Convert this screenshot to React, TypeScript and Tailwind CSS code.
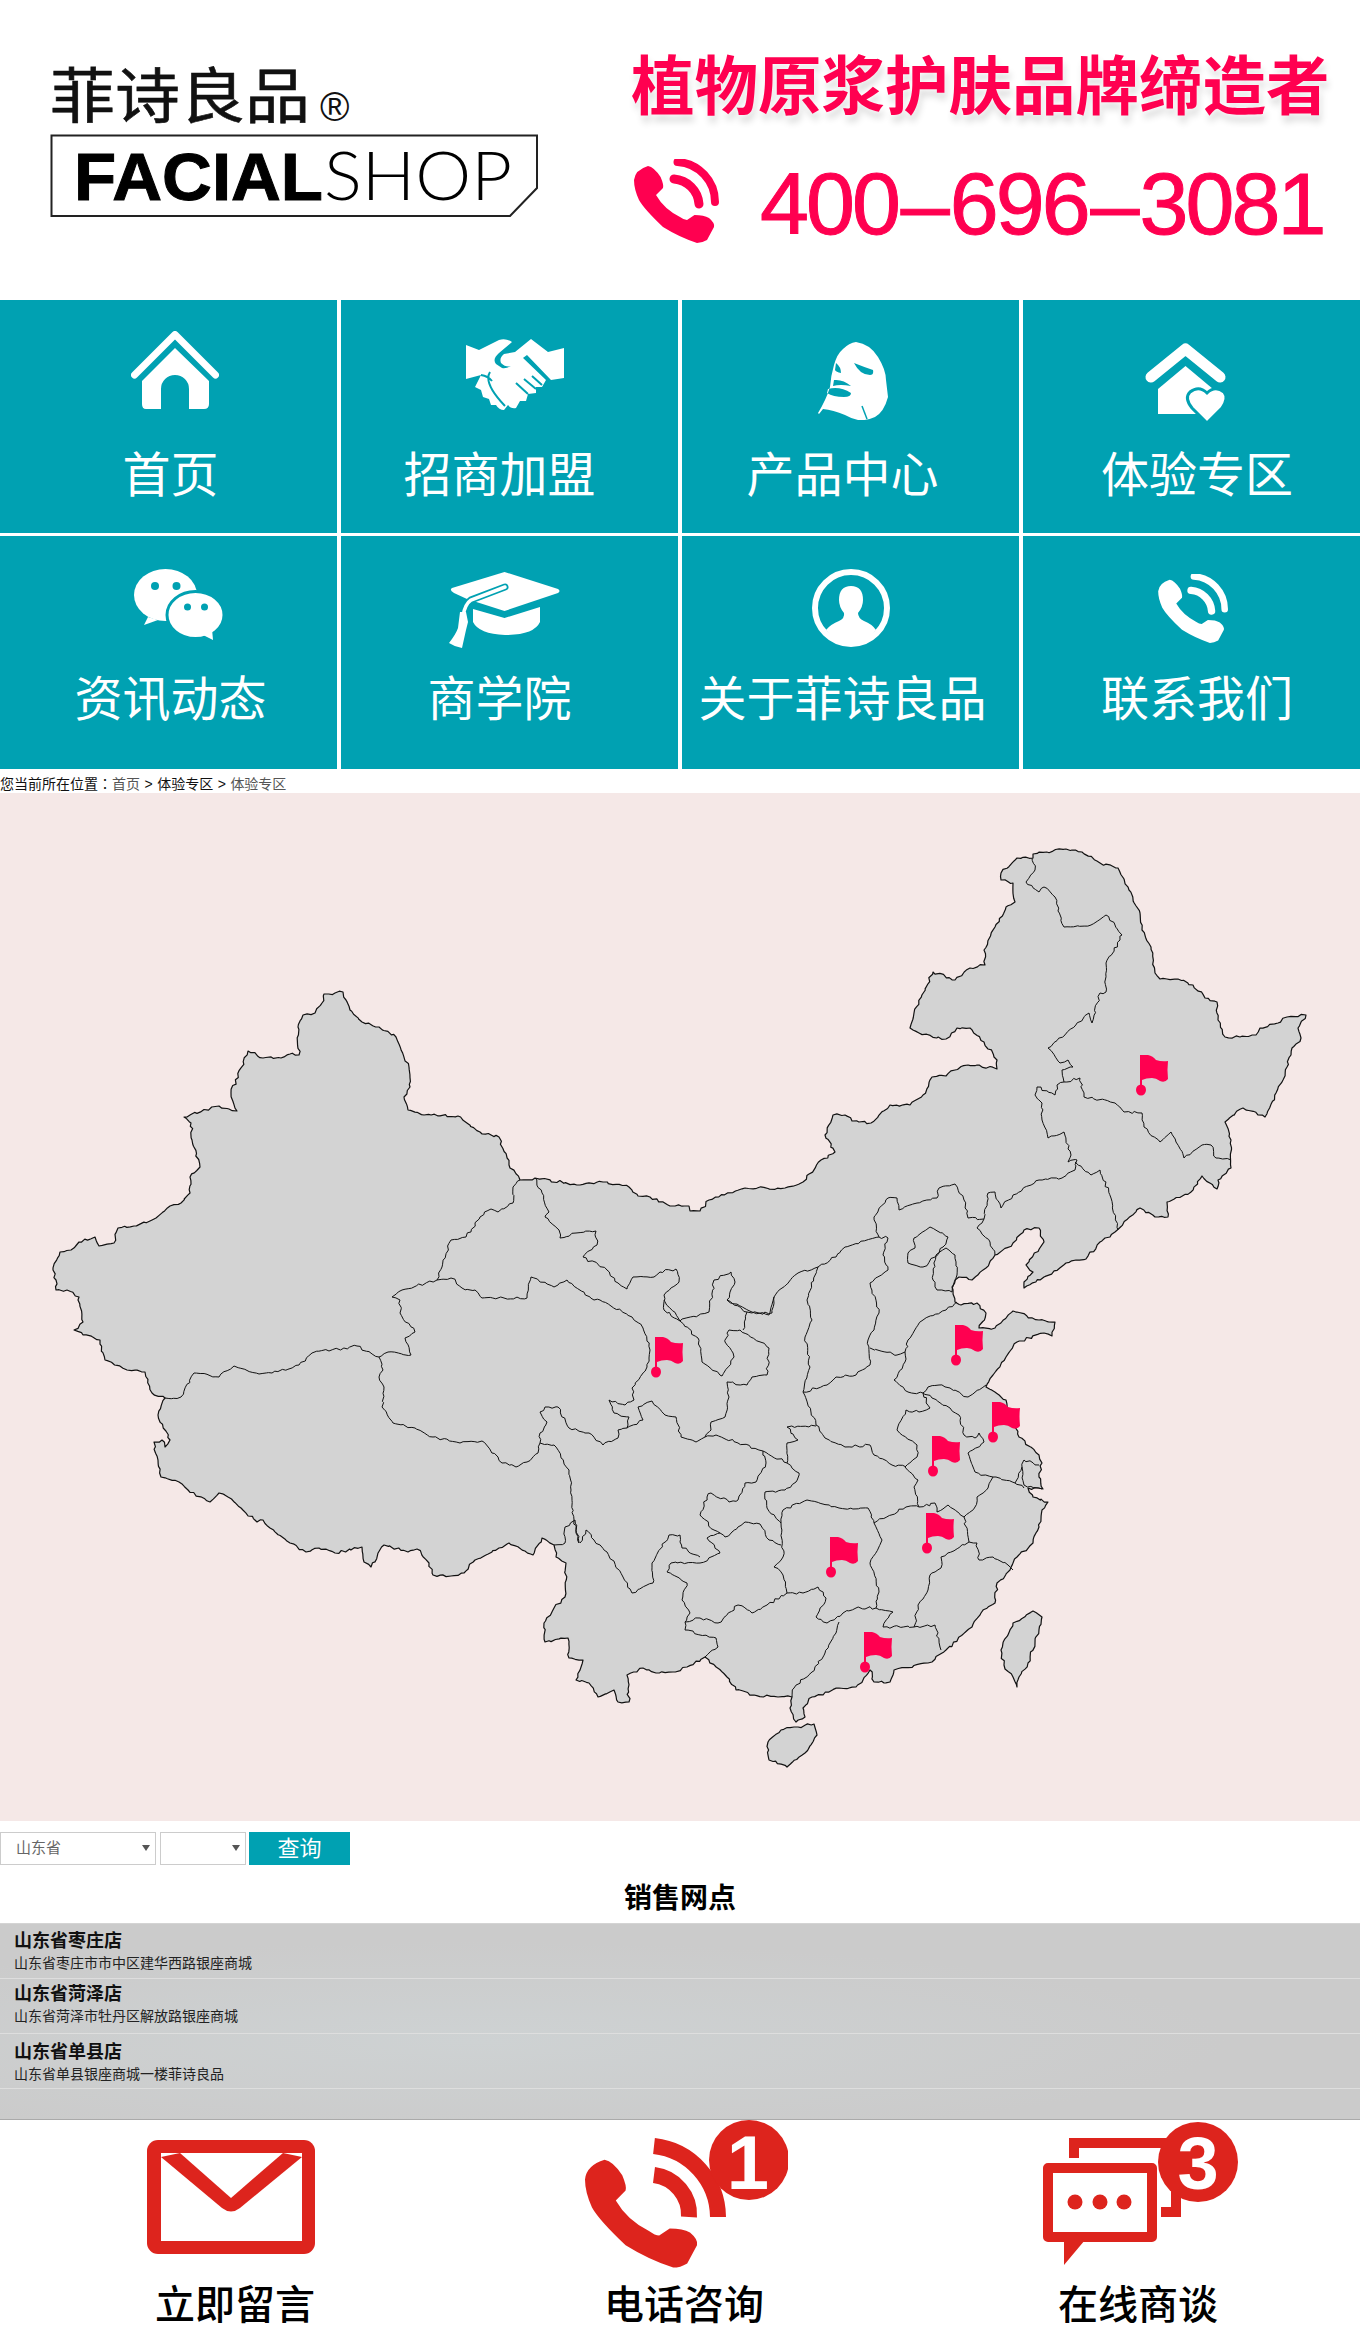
import React from 'react';

const TEAL = '#00a1b2';
const RED = '#dd241d';

// map traced in page coordinates, then roughened so the borders look hand drawn
const OUTER =
  '53,1270 60,1252 71,1250 79,1242 95,1237 99,1246 114,1243 118,1228 134,1226 150,1221 170,1206 181,1203 190,1193 190,1177 200,1167 192,1140 191,1123 184,1117 219,1106 237,1111 231,1093 248,1051 263,1058 281,1058 290,1054 299,1055 298,1027 303,1015 315,1013 322,1003 324,994 335,993 343,992 346,1000 350,1010 362,1022 379,1027 396,1037 409,1067 410,1087 404,1097 408,1110 424,1115 458,1116 480,1132 499,1137 509,1165 520,1180 535,1178 580,1185 603,1182 629,1187 638,1196 650,1197 670,1206 689,1206 690,1211 700,1211 709,1200 745,1188 785,1188 803,1182 821,1160 835,1152 825,1135 833,1115 845,1115 852,1121 871,1123 890,1105 910,1105 923,1095 932,1077 946,1076 955,1070 968,1065 977,1065 997,1069 997,1060 984,1042 970,1028 957,1028 946,1039 919,1033 910,1028 914,1013 933,972 955,980 970,968 985,965 984,950 995,927 1006,907 1015,902 1013,883 1001,880 1001,873 1017,858 1033,858 1033,854 1066,849 1082,852 1100,863 1118,868 1129,890 1140,913 1142,930 1151,947 1155,973 1160,979 1178,979 1193,985 1205,998 1217,1002 1218,1020 1225,1037 1240,1037 1256,1035 1260,1028 1278,1023 1287,1017 1306,1015 1298,1028 1301,1038 1292,1048 1287,1067 1283,1080 1276,1093 1265,1117 1243,1108 1225,1122 1231,1140 1231,1168 1218,1180 1217,1189 1202,1176 1191,1192 1167,1202 1168,1217 1155,1217 1140,1208 1115,1232 1100,1242 1086,1259 1066,1263 1044,1277 1024,1288 1024,1282 1033,1272 1026,1265 1044,1242 1039,1228 1024,1230 1013,1243 995,1255 986,1268 972,1280 959,1277 952,1287 955,1302 961,1305 977,1303 986,1313 979,1328 995,1328 1013,1311 1039,1320 1055,1322 1052,1336 1044,1333 1017,1342 1006,1357 993,1375 986,1387 1006,1400 1019,1437 1039,1455 1042,1463 1039,1477 1043,1489 1028,1488 1033,1497 1048,1502 1042,1510 1039,1527 1033,1543 1017,1557 1010,1570 997,1583 995,1603 981,1613 972,1627 946,1650 928,1663 894,1670 890,1682 874,1682 870,1670 856,1687 839,1688 812,1697 803,1708 805,1717 796,1722 790,1708 792,1697 778,1697 754,1695 736,1690 727,1677 705,1657 687,1667 673,1672 656,1673 643,1668 627,1675 629,1702 618,1702 614,1690 598,1697 589,1683 576,1680 583,1660 569,1658 568,1638 545,1642 544,1623 554,1608 565,1597 566,1563 556,1557 554,1545 542,1538 533,1555 509,1543 475,1560 464,1573 451,1576 433,1575 429,1563 417,1549 408,1552 384,1545 371,1567 364,1562 362,1547 335,1553 319,1548 306,1552 290,1543 270,1528 263,1520 257,1522 241,1508 228,1497 219,1493 210,1502 188,1490 179,1482 161,1477 154,1442 162,1440 165,1447 170,1440 158,1415 165,1398 152,1393 145,1372 127,1370 105,1360 100,1340 74,1330 83,1322 78,1300 79,1297 67,1290 56,1290 56,1280';

const ISLANDS = [
  '1033,1611 1042,1617 1035,1643 1028,1663 1019,1677 1017,1687 1013,1677 1004,1665 1001,1650 1013,1623',
  '814,1724 817,1735 805,1753 787,1767 769,1760 768,1742 781,1730 798,1727',
];

const BORDERS = [
  // xinjiang, tibet, qinghai
  '520,1180 513,1187 513,1203 498,1212 491,1209 480,1217 466,1237 451,1240 442,1267 437,1280 402,1290 392,1297 400,1300 400,1313 415,1332 405,1338 411,1355 388,1352 379,1357 357,1346 312,1353 299,1365 272,1373 259,1374 234,1366 219,1377 194,1373 181,1397 165,1398',
  '379,1357 383,1370 379,1377 384,1387 382,1407 393,1423 415,1428 433,1437 460,1443 482,1441 498,1457 502,1463 516,1467 527,1462 538,1453 540,1443 554,1445 569,1470 571,1490 574,1520 576,1533 579,1543 575,1520 565,1527 565,1543 554,1545',
  '540,1443 540,1433 547,1422 540,1412 545,1407 558,1407 569,1428 589,1433 603,1445 618,1438 618,1430 627,1428',
  '600,1300 632,1317 643,1328 650,1350 647,1367 632,1388 634,1400 625,1405 609,1400 614,1413 629,1417 627,1428 643,1420 638,1407 652,1401 665,1415 676,1417 681,1437 696,1442 705,1437',
  // gansu, ningxia, inner mongolia
  '437,1280 451,1278 462,1288 475,1290 482,1298 504,1298 527,1298 531,1277 554,1287 567,1280 594,1300 600,1300',
  '535,1178 549,1212 545,1217 559,1230 560,1238 576,1233 596,1231 597,1245 583,1257 607,1270 618,1283 627,1289 633,1277 654,1277 660,1272 676,1269 679,1282 664,1295 664,1310 680,1321 709,1312 714,1280 731,1272 735,1282 727,1300 752,1312 769,1315 774,1297 798,1273 818,1267 836,1257 845,1247 879,1237',
  '664,1300 680,1321 698,1338 702,1362 722,1376 734,1357 725,1342 729,1330 740,1330 769,1348 767,1375 752,1377 747,1385 727,1382 729,1397 725,1417 711,1422 711,1430 705,1437 716,1435 738,1443 763,1451 787,1463',
  '727,1300 747,1312 743,1330',
  '747,1312 752,1313 772,1313 774,1297',
  // hebei, shanxi, henan, shandong
  '818,1267 807,1300 812,1320 805,1337 810,1367 803,1392 816,1425 825,1438 845,1447 870,1445 874,1455 892,1465 906,1467',
  '879,1237 874,1217 888,1198 897,1198 899,1210 917,1203 937,1198 939,1188 955,1184 964,1200 968,1218 984,1219 977,1228 990,1242 995,1255',
  '879,1237 888,1238 883,1255 888,1270 870,1283 879,1313 874,1330 868,1340 870,1365 856,1375 836,1377 827,1385 803,1392',
  '870,1348 897,1355 905,1352 908,1340 923,1320 946,1310 957,1302',
  '905,1352 905,1362 894,1380 908,1392 923,1393 928,1387 939,1385 950,1388 968,1397 986,1385',
  '923,1393 930,1408 919,1412 906,1410 897,1430 917,1445 917,1457 905,1467 918,1480 914,1487 919,1507 906,1507 874,1523',
  // north east
  '984,1219 988,1193 995,1192 1001,1208 1013,1195 1039,1180 1062,1178 1075,1170 1077,1160 1068,1162 1071,1155 1064,1132 1048,1138 1042,1120 1042,1103 1035,1095 1037,1087 1055,1095 1057,1085 1064,1082 1080,1078 1084,1097 1115,1103 1124,1112 1142,1113 1144,1127 1160,1142 1171,1132 1184,1158 1202,1145 1211,1145 1216,1158 1231,1160',
  '1075,1162 1091,1175 1100,1170 1111,1198 1118,1230',
  '1064,1082 1062,1070 1073,1067 1068,1060 1060,1063 1048,1048 1089,1013 1092,1023 1100,993 1106,992 1106,963 1120,940 1122,935 1106,915 1091,925 1064,927 1055,897 1044,887 1039,892 1026,882 1035,870 1032,858',
  // beijing, tianjin
  '930,1227 948,1237 943,1247 935,1257 923,1267 908,1263 908,1253 915,1248 914,1238 930,1227',
  '946,1248 955,1255 957,1275 952,1292 937,1290 933,1280 936,1255 946,1248',
  // sichuan, chongqing, hubei, hunan
  '763,1451 766,1463 756,1482 745,1483 738,1500 729,1502 711,1493 707,1497 700,1515 714,1530 720,1533',
  '787,1463 787,1443 798,1440 787,1427 816,1426',
  '787,1463 799,1473 796,1482 785,1490 765,1492 767,1508 781,1523 783,1510 807,1500 839,1508 868,1508 874,1523',
  '874,1523 882,1540 870,1563 879,1592 876,1608 893,1612 883,1627 914,1627',
  '876,1608 856,1608 843,1613 827,1623 816,1617 826,1598 818,1587 803,1593 787,1593 783,1575 774,1567 783,1557 781,1523',
  // east coast provinces
  '932,1398 950,1408 959,1415 964,1435 975,1438 979,1433 984,1442 968,1453 975,1472 993,1477 1015,1483 1022,1467 1024,1460 1039,1465',
  '923,1393 932,1398',
  '1022,1467 1024,1485 1042,1489',
  '993,1477 988,1488 977,1497 975,1507 964,1517 948,1505 937,1512 935,1503 919,1507',
  '1015,1483 1024,1488',
  '964,1517 969,1542 977,1543 979,1560 993,1557 1008,1565 1013,1570',
  '969,1542 941,1557 941,1568 930,1575 928,1590 918,1605 914,1627 935,1625 941,1650',
  // guangxi, guizhou, yunnan
  '839,1622 836,1633 825,1653 812,1672 794,1688 792,1697',
  '787,1593 767,1605 752,1613 738,1605 718,1623 700,1618 685,1622 685,1630 716,1638 718,1647 705,1657',
  '685,1622 690,1613 682,1600 687,1583 667,1572 671,1563 700,1563 720,1553 707,1538 720,1533 725,1537 745,1522 760,1524 769,1540 781,1545',
  '700,1557 682,1548 680,1535 669,1535 652,1563 653,1583 632,1593 623,1577 607,1552 594,1540 586,1530 580,1543',
];

const FLAGS = [
  [1140, 1055],
  [955, 1325],
  [992, 1402],
  [932, 1436],
  [926, 1513],
  [830, 1537],
  [864, 1632],
  [655, 1337],
];

function rough(line: string, closed: boolean) {
  const pts = line.split(' ').map((p) => p.split(',').map(Number));
  let seed = pts.length * 7 + 3;
  const next = () => {
    seed = (seed * 9301 + 49297) % 233280;
    return seed / 233280 - 0.5;
  };
  const out: number[][] = [];
  const count = closed ? pts.length : pts.length - 1;
  for (let i = 0; i < count; i++) {
    const a = pts[i];
    const b = pts[(i + 1) % pts.length];
    const len = Math.hypot(b[0] - a[0], b[1] - a[1]);
    const steps = Math.max(1, Math.round(len / 3.5));
    for (let s = 0; s < steps; s++) {
      const t = s / steps;
      const wobble = s === 0 ? 0 : 2.6;
      out.push([a[0] + (b[0] - a[0]) * t + next() * wobble, a[1] + (b[1] - a[1]) * t + next() * wobble]);
    }
  }
  if (!closed) out.push(pts[pts.length - 1]);
  const d = out.map((p) => p[0].toFixed(1) + ' ' + p[1].toFixed(1)).join(' L');
  return 'M' + d + (closed ? ' Z' : '');
}

const HANDSET =
  'M14 7Q20 8 26.6 18Q30 26 29 29L22 36Q30 50 46 58Q50 61 53 61L60.5 56Q70 56 75 59Q81 64 80 68L73 81Q68 84 63 84Q45 78 29 68Q10 50 5 41Q0 30 0 21Q1 11 14 7Z';

const PhoneIcon: React.FC<{ color: string; className: string }> = ({ color, className }) => (
  <svg viewBox="0 0 86 84" className={className}>
    <path d={HANDSET} fill={color} />
    <path d="M43.5 3A40 40 0 0 1 81 43" fill="none" stroke={color} strokeWidth="8" strokeLinecap="round" />
    <path d="M40 20A27 27 0 0 1 65 45" fill="none" stroke={color} strokeWidth="9" strokeLinecap="round" />
  </svg>
);

const HomeIcon = () => (
  <svg viewBox="0 0 88 78" className="ml-[13px] h-[78px] w-[88px]">
    <path d="M3.500 44L44 3.500L84.500 44" fill="none" stroke="white" strokeWidth="7" strokeLinecap="round" strokeLinejoin="round" />
    <path d="M44 17L78 50V73Q78 78 73 78H58V58A14 14 0 0 0 30 58V78H15Q11 78 11 73V50Z" fill="white" />
  </svg>
);

const HandshakeIcon = () => (
  <svg viewBox="0 0 99 71" className="ml-[12px] h-[71px] w-[99px]">
    <path d="M0 6L13 11L33 1Q40-1 46 3L33 14Q26 20 30 25L36 29Q41 30 46 26L56 18L80 41L76 48L70 48L70 54L62 55L60 62L54 62L50 69Q45 70 42 66L38 71Q33 71 30 66L25 66L23 60L17 58L15 51L9 48L15 36L0 40Z" fill="white" />
    <path d="M49 13L65 0L82 13L98 9V39L85 41L61 16L46 27Q40 29 35 24Q33 19 38 15Z" fill="white" />
    <path d="M15 36Q22 37 26 42M24 33Q17 44 39 67M50 44L62 55M58 40L70 50M66 37L76 46" fill="none" stroke={TEAL} strokeWidth="2" />
  </svg>
);

const MaskIcon = () => (
  <svg viewBox="0 0 70 78" className="ml-[5px] h-[78px] w-[70px]">
    <path fillRule="evenodd" d="M38 0Q52 2 60 15Q68 28 68 38L70 55Q66 70 57 75Q48 79 40 78Q32 76 27 73Q15 68 5 67L1 72L0 71Q8 58 12 45Q13 33 16 23Q19 12 25 7Q31 1 38 0ZM36 21Q46 25 55 28Q56 33 52 33Q42 33 36 21ZM18 21Q23 25 23 31Q18 30 17 28ZM16 38Q25 37 33 44Q22 42 15 44ZM10 47Q22 44 33 51Q33 55 26 55Q15 55 9 51Z" fill="white" />
    <path d="M44 64L49 77" stroke={TEAL} strokeWidth="1.500" />
  </svg>
);

const HouseHeartIcon = () => (
  <svg viewBox="0 0 81 80" className="mr-[12px] h-[80px] w-[81px] overflow-visible">
    <path d="M6 34L40.500 6L75 34" fill="none" stroke="white" strokeWidth="11" strokeLinecap="round" strokeLinejoin="round" />
    <path d="M13 46L40.500 23L68 46V71H13Z" fill="white" />
    <path d="M62 80L47 65Q39 55 45 49Q54 42 62 50Q70 42 79 49Q84 55 77 65Z" fill="white" stroke={TEAL} strokeWidth="3" />
  </svg>
);

const WechatIcon = () => (
  <svg viewBox="0 0 90 71" className="ml-[20px] h-[71px] w-[90px]">
    <ellipse cx="31.500" cy="26" rx="31.500" ry="26" fill="white" />
    <path d="M14 48L10 56L24 51Z" fill="white" />
    <ellipse cx="61.500" cy="46" rx="28.500" ry="23.500" fill="white" stroke={TEAL} strokeWidth="3" />
    <path d="M69 66L79 71L78 60Z" fill="white" />
    <circle cx="21" cy="17" r="4" fill={TEAL} />
    <circle cx="42.500" cy="17" r="4" fill={TEAL} />
    <circle cx="53.500" cy="38" r="3.500" fill={TEAL} />
    <circle cx="70.500" cy="38" r="3.500" fill={TEAL} />
  </svg>
);

const CapIcon = () => (
  <svg viewBox="0 0 111 76" className="mr-[11px] h-[76px] w-[111px]">
    <path d="M55.500 0L109 17Q112 19 109 21L55.500 39L18 27L5 21Q0 18 3 16Z" fill="white" />
    <path d="M24 37L55.500 46L91 35V50Q85 63 56 63Q30 62 24 50Z" fill="white" />
    <path d="M56 15L22 28Q16 32 14 44" fill="none" stroke={TEAL} strokeWidth="7" strokeLinecap="round" />
    <path d="M56 15L22 28Q16 32 14 44" fill="none" stroke="white" strokeWidth="3.500" strokeLinecap="round" />
    <path d="M11 40L17 40L19 50L17 58L13 76Q6 75 0 71Q7 62 9 56Z" fill="white" />
  </svg>
);

const PersonIcon = () => (
  <svg viewBox="0 0 78 78" className="h-[78px] w-[78px]">
    <circle cx="39" cy="39" r="36" fill="none" stroke="white" strokeWidth="6" />
    <path d="M39 17Q51 17 51 31Q51 38 46 44Q46 49 52 52Q60 55 64 61Q54 74 39 74Q24 74 14 61Q19 55 27 52Q33 49 32 44Q27 38 27 31Q27 17 39 17Z" fill="white" />
  </svg>
);

const NAV = [
  { label: '首页', icon: <HomeIcon />, box: 'h-[146px] pt-[31px]', text: 'pl-[4px]' },
  { label: '招商加盟', icon: <HandshakeIcon />, box: 'h-[146px] pt-[39px]', text: 'pr-[20px]' },
  { label: '产品中心', icon: <MaskIcon />, box: 'h-[146px] pt-[42px]', text: 'pr-[16px]' },
  { label: '体验专区', icon: <HouseHeartIcon />, box: 'h-[146px] pt-[43px]', text: 'pl-[11px]' },
  { label: '资讯动态', icon: <WechatIcon />, box: 'h-[134px] pt-[33px]', text: 'pl-[4px]' },
  { label: '商学院', icon: <CapIcon />, box: 'h-[134px] pt-[36px]', text: 'pr-[20px]' },
  { label: '关于菲诗良品', icon: <PersonIcon />, box: 'h-[134px] pt-[33px]', text: 'pr-[16px]' },
  {
    label: '联系我们',
    icon: <PhoneIcon color="white" className="ml-[4px] h-[69px] w-[71px]" />,
    box: 'h-[134px] pt-[38px]',
    text: 'pl-[11px]',
  },
];

const STORES = [
  { name: '山东省枣庄店', address: '山东省枣庄市市中区建华西路银座商城', pad: 'pt-[5px]' },
  { name: '山东省菏泽店', address: '山东省菏泽市牡丹区解放路银座商城', pad: 'pt-[3px]' },
  { name: '山东省单县店', address: '山东省单县银座商城一楼菲诗良品', pad: 'pt-[6px]' },
];

const Logo = () => (
  <svg viewBox="45 30 500 190" className="ml-[45px] mt-[30px] h-[190px] w-[500px] shrink-0">
    <text x="50" y="118" fontSize="60" fill="#111" stroke="#111" strokeWidth="0.6" fontFamily="'Noto Sans CJK SC', sans-serif" textLength="260" lengthAdjust="spacingAndGlyphs">
      菲诗良品
    </text>
    <text x="320" y="121" fontSize="40" fill="#111" fontFamily="'Liberation Sans', sans-serif">
      ®
    </text>
    <path d="M51.500 135.500H537V188L510 216H51.500Z" fill="none" stroke="#222" strokeWidth="2" />
    <text x="74" y="200" fontSize="67" fontWeight="700" fill="#000" stroke="#000" strokeWidth="1" fontFamily="'Liberation Sans', sans-serif" textLength="249" lengthAdjust="spacingAndGlyphs">
      FACIAL
    </text>
    <text x="324" y="200" fontSize="67" fontWeight="300" fill="#000" fontFamily="Lato, 'Open Sans', sans-serif" textLength="188" lengthAdjust="spacingAndGlyphs">
      SHOP
    </text>
  </svg>
);

const ChinaMap = () => (
  <svg viewBox="0 793 1360 1028" className="block h-[1028px] w-full">
    <path d={rough(OUTER, true)} fill="#d3d3d3" stroke="#111" strokeWidth="1.200" strokeLinejoin="round" />
    {ISLANDS.map((line) => (
      <path key={line} d={rough(line, true)} fill="#d3d3d3" stroke="#111" strokeWidth="1.200" strokeLinejoin="round" />
    ))}
    {BORDERS.map((line) => (
      <path key={line} d={rough(line, false)} fill="none" stroke="#111" strokeWidth="1" strokeLinejoin="round" />
    ))}
    {FLAGS.map(([x, y]) => (
      <g key={x} transform={`translate(${x} ${y})`} fill="#ff0050">
        <path d="M0 0H8Q13 1 16 5Q22 7 28 6Q27 14 28 24Q25 28 20 26Q16 23 12 23Q6 23 2 25V32H0Z" />
        <ellipse cx="1" cy="35" rx="5" ry="5.500" />
      </g>
    ))}
  </svg>
);

const Caret = ({ className }: { className: string }) => (
  <span className={`pointer-events-none absolute top-[13px] h-0 w-0 border-x-[4px] border-t-[6px] border-x-transparent border-t-[#555] ${className}`} />
);

export default function App() {
  return (
    <div className="w-full bg-white font-['Liberation_Sans','Noto_Sans_CJK_SC',sans-serif]">
      <header className="flex h-[300px]">
        <Logo />
        <div className="ml-[86px]">
          <div className="mt-[47px] whitespace-nowrap text-[63.5px] font-bold leading-[80px] text-[#ff0050] [text-shadow:0_0_5px_#fff,2px_7px_7px_#ddd]">
            植物原浆护肤品牌缔造者
          </div>
          <div className="mt-[32px] flex items-start">
            <PhoneIcon color="#ff0050" className="ml-[3px] h-[84px] w-[86px]" />
            <span className="ml-[40px] whitespace-nowrap text-[88px] leading-[90px] tracking-[-3px] text-[#ff0050] [-webkit-text-stroke:1px_#ff0050]">
              400<span className="mx-[3px]">–</span>696<span className="mx-[3px]">–</span>3081
            </span>
          </div>
        </div>
      </header>

      <nav className="grid grid-cols-4 gap-x-[4px] gap-y-[3px]">
        {NAV.map((item) => (
          <a key={item.label} className="flex h-[233px] flex-col items-center bg-[#00a1b2] text-white">
            <div className={`flex flex-col items-center ${item.box}`}>{item.icon}</div>
            <div className={`whitespace-nowrap text-[48px] font-normal leading-[60px] ${item.text}`}>{item.label}</div>
          </a>
        ))}
      </nav>

      <div className="h-[24px] whitespace-nowrap text-[14px] leading-[28px] text-[#111]">
        您当前所在位置<span className="font-['Noto_Sans_CJK_TC']">：</span>
        <span className="text-[#555]">首页</span>
        <span className="mx-[4.5px]">&gt;</span>体验专区<span className="mx-[4.5px]">&gt;</span>
        <span className="text-[#555]">体验专区</span>
      </div>

      <div className="bg-[#f5e8e7]">
        <ChinaMap />
      </div>

      <div className="flex h-[72px] items-start gap-x-[3px] pt-[11px]">
        <div className="relative">
          <select className="h-[33px] w-[156px] appearance-none rounded-none border border-[#ccc] bg-white pl-[15px] text-[15px] text-[#666]">
            <option>山东省</option>
          </select>
          <Caret className="left-[142px]" />
        </div>
        <div className="relative ml-[1px]">
          <select className="h-[33px] w-[86px] appearance-none rounded-none border border-[#ccc] bg-white">
            <option></option>
          </select>
          <Caret className="left-[72px]" />
        </div>
        <button className="h-[33px] w-[101px] bg-[#00a1b2] text-[22px] leading-[33px] text-white">查询</button>
      </div>

      <h2 className="-mt-[12px] h-[42px] text-center text-[28px] font-bold leading-[36px] text-black">销售网点</h2>

      <div className="h-[197px] border-b border-b-[#aaa] border-t border-t-[#d4d4d4] bg-[radial-gradient(ellipse_at_35%_60%,#ced2d3_0%,#cbcbcb_60%)]">
        {STORES.map((store) => (
          <div key={store.name} className={`h-[55px] border-b border-b-[#dedede] pl-[14px] ${store.pad}`}>
            <div className="text-[18px] font-bold leading-[24px] text-[#111]">{store.name}</div>
            <div className="text-[14px] leading-[21px] text-[#222]">{store.address}</div>
          </div>
        ))}
      </div>

      <footer className="-mt-[2px] flex h-[221px] pl-[131px]">
        <div className="w-[208px] text-center">
          <svg viewBox="131 2118 208 158" className="block h-[158px] w-[208px]">
            <rect x="147" y="2140" width="168" height="114" rx="11" fill={RED} />
            <rect x="161" y="2153" width="141" height="88" fill="white" />
            <path d="M161 2157L180 2153H283L302 2157L240 2208Q231 2215 222 2208Z" fill={RED} />
            <path d="M180 2153H283L231 2198Z" fill="white" />
          </svg>
          <div className="text-[40px] font-medium leading-[58px] text-black">立即留言</div>
        </div>
        <div className="ml-[241px] w-[208px] text-center">
          <svg viewBox="580 2118 208 158" className="block h-[158px] w-[208px]">
            <path d={HANDSET} fill={RED} transform="translate(585 2150) scale(1.400)" />
            <path d="M654 2146A72 72 0 0 1 718 2217" fill="none" stroke={RED} strokeWidth="16" />
            <path d="M654 2175A40 40 0 0 1 689 2217" fill="none" stroke={RED} strokeWidth="16" />
            <ellipse cx="749" cy="2160" rx="40" ry="40" fill={RED} />
            <text x="748" y="2189" textAnchor="middle" fontSize="76" fontWeight="700" fill="white" fontFamily="'Liberation Sans', sans-serif">
              1
            </text>
          </svg>
          <div className="text-[40px] font-medium leading-[58px] text-black">电话咨询</div>
        </div>
        <div className="ml-[246px] w-[208px] text-center">
          <svg viewBox="1034 2118 208 158" className="block h-[158px] w-[208px]">
            <path d="M1074 2158V2143H1176V2212H1161" fill="none" stroke={RED} strokeWidth="10" />
            <path d="M1048 2168H1152V2237H1048Z" fill="white" stroke={RED} strokeWidth="10" strokeLinejoin="round" />
            <path d="M1064 2240V2265L1085 2240ZM1074 2232V2242H1086Z" fill={RED} />
            <circle cx="1075" cy="2202" r="7.500" fill={RED} />
            <circle cx="1100" cy="2202" r="7.500" fill={RED} />
            <circle cx="1124" cy="2202" r="7.500" fill={RED} />
            <ellipse cx="1198" cy="2162" rx="40" ry="40" fill={RED} />
            <text x="1198" y="2189" textAnchor="middle" fontSize="74" fontWeight="700" fill="white" fontFamily="'Liberation Sans', sans-serif">
              3
            </text>
          </svg>
          <div className="text-[40px] font-medium leading-[58px] text-black">在线商谈</div>
        </div>
      </footer>
    </div>
  );
}
